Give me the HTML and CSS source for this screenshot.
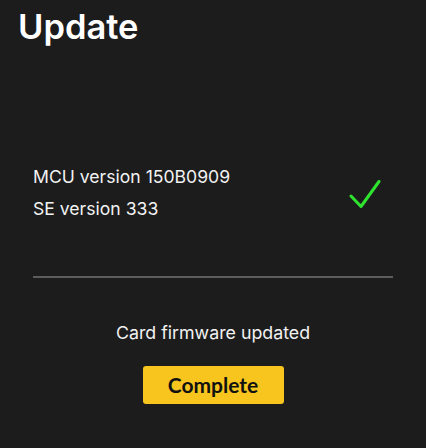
FILE: index.html
```html
<!DOCTYPE html>
<html>
<head>
<meta charset="utf-8">
<link rel="stylesheet" href="styles.css">
</head>
<body>
<div class="page">
  <h1 class="title">Update</h1>
  <div class="info">
    <div class="versions">
      <div class="line">MCU version 150B0909</div>
      <div class="line">SE version 333</div>
    </div>
    <svg class="check" width="34" height="32" viewBox="0 0 34 32">
      <polyline points="3,16 13,26.5 31,1.5" fill="none" stroke="#2ee32e" stroke-width="3" stroke-linecap="round" stroke-linejoin="round"/>
    </svg>
  </div>
  <div class="divider"></div>
  <div class="status">Card firmware updated</div>
  <div class="actions">
    <button class="btn">Complete</button>
  </div>
</div>
</body>
</html>
```

FILE: styles.css
```css
html, body {
  margin: 0;
  padding: 0;
  background: #1c1c1c;
}
.page {
  width: 426px;
  height: 448px;
  font-family: Inter, "Noto Sans", sans-serif;
  color: #f2f2f2;
  display: flex;
  flex-direction: column;
}
.title {
  margin: 0;
  padding: 5px 0 0 18px;
  font-size: 34.5px;
  font-weight: 600;
  line-height: 44px;
  color: #ffffff;
}
.info {
  margin-top: 117px;
  padding: 0 44px 0 33px;
  display: flex;
  align-items: center;
  justify-content: space-between;
}
.versions {
  display: flex;
  flex-direction: column;
  gap: 10px;
}
.line {
  font-size: 17.6px;
  line-height: 22px;
}
.check {
  display: block;
  margin-top: 6px;
}
.divider {
  margin: 56px 33px 0 33px;
  height: 1.5px;
  background: #5c5c5c;
}
.status {
  margin-top: 44px;
  text-align: center;
  font-size: 17.8px;
  line-height: 22px;
}
.actions {
  margin-top: 22px;
  display: flex;
  justify-content: center;
}
.btn {
  width: 141px;
  height: 38px;
  border: none;
  border-radius: 3px;
  background: #f7c51e;
  color: #111111;
  font-family: Lato, Inter, sans-serif;
  font-weight: 700;
  font-size: 21px;
  padding: 0;
}
```
